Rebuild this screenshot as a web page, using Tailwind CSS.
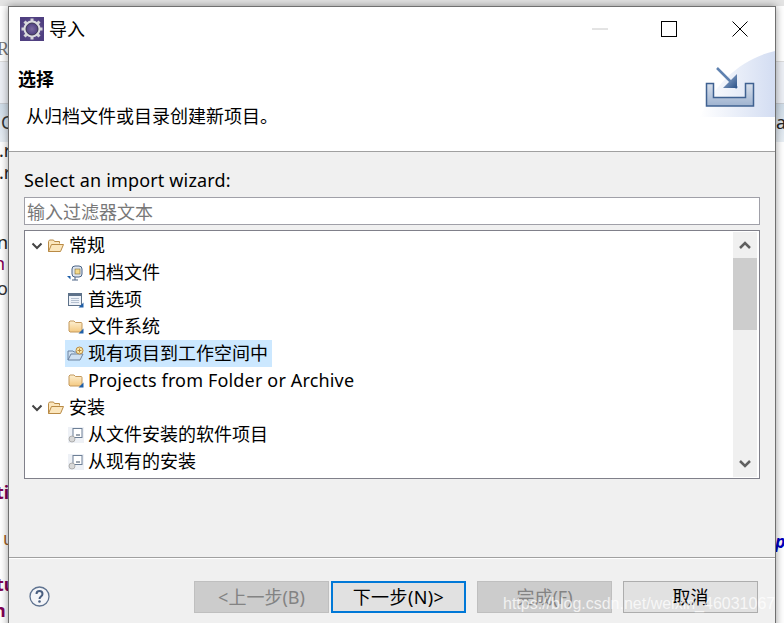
<!DOCTYPE html>
<html lang="zh">
<head>
  <meta charset="UTF-8" />
  <title>导入</title>
  <script src="https://cdn.jsdelivr.net/npm/@tailwindcss/browser@4"></script>
</head>
<body class="relative w-[784px] h-[623px] overflow-hidden bg-white font-['Noto_Sans','Noto_Sans_CJK_SC',sans-serif] text-[18px] text-black">
  <svg class="absolute w-0 h-0">
    <defs>
      <linearGradient id="fold" x1="0" y1="0" x2="0" y2="1"><stop offset="0" stop-color="#fdf0d2"/><stop offset="1" stop-color="#f4c981"/></linearGradient>
      <linearGradient id="sw" x1="0" y1="0" x2="1" y2="0"><stop offset="0" stop-color="#ffffff"/><stop offset="1" stop-color="#d3ddf2"/></linearGradient>
      <linearGradient id="tray" x1="0" y1="0" x2="0" y2="1"><stop offset="0" stop-color="#d8e0ec"/><stop offset="1" stop-color="#9fb3d0"/></linearGradient>
      <linearGradient id="head" x1="0" y1="0" x2="1" y2="1"><stop offset="0" stop-color="#a5bada"/><stop offset="1" stop-color="#2b5288"/></linearGradient>
      <radialGradient id="gearbg"><stop offset="0" stop-color="#7a6a9e"/><stop offset="1" stop-color="#4f3f80"/></radialGradient>
    </defs>
  </svg>

  <!-- editor behind the dialog -->
  <div class="absolute inset-0 flex flex-col">
    <div class="h-[6px] bg-[#e4e4e4]"></div>
    <div class="h-[56px] bg-white border-b border-[#dcdcdc]"></div>
    <div class="h-[42px] bg-[#eceff5] border-b border-[#c8ccd2]"></div>
    <div class="h-[38px] bg-gradient-to-b from-[#cfdce8] to-[#e8eef4]"></div>
    <div class="flex-1 bg-white"></div>
  </div>
  <span class="absolute left-[-3px] top-[39px] leading-5 text-[#777] font-['Liberation_Serif',serif]">R</span>
  <span class="absolute left-[1px] top-[112px] leading-5 text-[#333]">C</span>
  <span class="absolute left-[-1px] top-[140px] leading-5 text-[#222]">.r</span>
  <span class="absolute left-[-1px] top-[162px] leading-5 text-[#222]">.r</span>
  <span class="absolute left-[-3px] top-[232px] leading-5 text-[#222]">ns</span>
  <span class="absolute left-[-6px] top-[253px] leading-5 text-[#7f0055]">n</span>
  <span class="absolute left-[-3px] top-[278px] leading-5 text-[#333]">or</span>
  <span class="absolute left-[-4px] top-[482px] leading-5 font-bold text-[#7f0055]">ti</span>
  <span class="absolute left-[3px] top-[528px] leading-5 text-[#a0622a]">u</span>
  <span class="absolute left-[-4px] top-[574px] leading-5 font-bold text-[#7f0055]">tu</span>
  <span class="absolute left-[-6px] top-[600px] leading-5 font-bold text-[#7f0055]">n</span>
  <span class="absolute left-[776px] top-[112px] leading-5 text-[#222]">a</span>
  <span class="absolute left-[775px] top-[531px] leading-5 italic font-bold text-[#0000c0]">p</span>

  <!-- dialog -->
  <div class="absolute left-[8px] top-[6px] w-[768px] h-[640px] flex flex-col bg-[#f0f0f0] border border-[#707070] shadow-[0_0_8px_rgba(0,0,0,0.4)]">
    <div class="h-[145px] shrink-0 relative bg-white border-b border-[#a0a0a0]">
      <div class="flex items-center h-[44px] pl-[11px]">
        <svg class="w-[24px] h-[24px]" viewBox="0 0 24 24">
          <rect width="24" height="24" fill="url(#gearbg)"/>
          <g stroke="#d4d4d8" stroke-width="3">
            <path d="M12 1.500v21M1.500 12h21M4.500 4.500l15 15M19.500 4.500l-15 15"/>
          </g>
          <circle cx="12" cy="12" r="8.500" fill="#dcdce0"/>
          <circle cx="12" cy="12" r="6" fill="url(#gearbg)" stroke="#3a3450"/>
        </svg>
        <span class="ml-[5px] leading-none">导入</span>
      </div>
      <svg class="absolute left-[583px] top-[21px] w-[16px] h-[2px]" viewBox="0 0 16 2"><path d="M0 1h16" stroke="#c8c8c8"/></svg>
      <svg class="absolute left-[652px] top-[14px] w-[16px] h-[16px]" viewBox="0 0 16 16"><rect x=".5" y=".5" width="15" height="15" fill="none" stroke="#000"/></svg>
      <svg class="absolute left-[723px] top-[14px] w-[16px] h-[16px]" viewBox="0 0 16 16"><path d="M.5.5l15 15M15.500.5l-15 15" stroke="#000" fill="none"/></svg>
      <p class="absolute left-[9px] top-[60px] font-bold leading-6">选择</p>
      <p class="absolute left-[17px] top-[97px] leading-6">从归档文件或目录创建新项目。</p>
      <svg class="absolute right-0 top-[43px] w-[76px] h-[68px]" viewBox="0 0 76 68">
        <path d="M1 67C16 32 44 8 76 1V67Z" fill="url(#sw)"/>
        <path d="M7.500 33.500H14.500V47.500H46.500V33.500H54.500V56H7.500Z" fill="url(#tray)" stroke="#3f6191" stroke-width="1.500"/>
        <path d="M18 18l20 20" stroke="#5f82b0" stroke-width="2.500"/>
        <path d="M38 24V38H24Z" fill="url(#head)"/>
      </svg>
    </div>

    <div class="flex-1 border-b border-[#a0a0a0] relative px-[15px]">
      <p class="mt-[16px] leading-[24px] tracking-[0.16px]">Select an import wizard:</p>
      <div class="mt-[5px] h-[28px] w-[736px] bg-white border border-[#a0a0a8] pl-[2px] leading-[28px] text-[#787878]">输入过滤器文本</div>
      <div class="mt-[5px] h-[249px] w-[736px] bg-white border border-[#80808a] flex">
        <ul class="flex-1 pt-[1px]">
          <li class="h-[27px] flex items-center pl-[6px]">
            <svg class="w-[12px] h-[8px]" viewBox="0 0 12 8"><path d="M1.500 1.500L6 6l4.500-4.500" fill="none" stroke="#444" stroke-width="2"/></svg>
            <svg class="ml-[5px] w-[16px] h-[14px]" viewBox="0 0 16 14"><path d="M.5 12.500V2.500l1-1.500h4l1 1.500h5v2M.5 12.500l3-7h12l-3 7Z" fill="#fbe6bd" stroke="#b98a45"/></svg>
            <span class="ml-[5px]">常规</span>
          </li>
          <li class="h-[27px] flex items-center pl-[42px]">
            <svg class="w-[16px] h-[16px]" viewBox="0 0 16 16"><rect x="5" y="1" width="10" height="11" rx="3" fill="#dfe6f0" stroke="#4a6385"/><rect x="8" y="4" width="5" height="5" fill="#f4d98a" stroke="#7a6a3a" stroke-width=".6"/><path d="M8 12v3M5 15h6" stroke="#4a6385"/><path d="M0 11h3.500v3.500Z" fill="#1f5fa8"/></svg>
            <span class="ml-[5px]">归档文件</span>
          </li>
          <li class="h-[27px] flex items-center pl-[43px]">
            <svg class="w-[16px] h-[16px]" viewBox="0 0 16 16"><rect x=".5" y="1.500" width="13" height="12" fill="#eef2f8" stroke="#5d7189"/><path d="M1 2h12v2H1Z" fill="#5d7189"/><path d="M3 6.500h8M3 8.500h8M3 10.500h8" stroke="#b4c0d0"/><path d="M15.500 10.500v5H10.500Z" fill="#1f5fa8"/></svg>
            <span class="ml-[4px]">首选项</span>
          </li>
          <li class="h-[27px] flex items-center pl-[43px]">
            <svg class="w-[16px] h-[15px]" viewBox="0 0 16 15"><path d="M1 12V3l1-1h4l1.500 1.500H13a1 1 0 0 1 1 1V12a1 1 0 0 1-1 1H2Z" fill="url(#fold)" stroke="#c4995c"/><path d="M15.500 9.500v5H10.500Z" fill="#1f5fa8"/></svg>
            <span class="ml-[4px]">文件系统</span>
          </li>
          <li class="h-[27px] flex items-center pl-[40px]">
            <span class="flex items-center h-[27px] bg-[#cce8ff] pr-[4px] pl-[2px]">
              <svg class="w-[18px] h-[16px]" viewBox="0 0 18 16"><path d="M1 14V5h5l1 1h4v2M1 14l3-6h12l-3 6Z" fill="#cfe0f2" stroke="#6c83a0"/><circle cx="12.500" cy="4.500" r="3.500" fill="#fbe9a8" stroke="#b98a45"/><path d="M10.500 4.500h4M12.500 2.500v4" stroke="#b98a45"/></svg>
              <span class="ml-[3px]">现有项目到工作空间中</span>
            </span>
          </li>
          <li class="h-[27px] flex items-center pl-[43px]">
            <svg class="w-[16px] h-[15px]" viewBox="0 0 16 15"><path d="M1 12V3l1-1h4l1.500 1.500H13a1 1 0 0 1 1 1V12a1 1 0 0 1-1 1H2Z" fill="url(#fold)" stroke="#c4995c"/><path d="M15.500 9.500v5H10.500Z" fill="#1f5fa8"/></svg>
            <span class="ml-[4px] tracking-[0.16px]">Projects from Folder or Archive</span>
          </li>
          <li class="h-[27px] flex items-center pl-[6px]">
            <svg class="w-[12px] h-[8px]" viewBox="0 0 12 8"><path d="M1.500 1.500L6 6l4.500-4.500" fill="none" stroke="#444" stroke-width="2"/></svg>
            <svg class="ml-[5px] w-[16px] h-[14px]" viewBox="0 0 16 14"><path d="M.5 12.500V2.500l1-1.500h4l1 1.500h5v2M.5 12.500l3-7h12l-3 7Z" fill="#fbe6bd" stroke="#b98a45"/></svg>
            <span class="ml-[5px]">安装</span>
          </li>
          <li class="h-[27px] flex items-center pl-[43px]">
            <svg class="w-[16px] h-[16px]" viewBox="0 0 16 16"><rect width="16" height="16" fill="#eef1f6"/><rect x="5" y="1.500" width="9" height="9" fill="#fff" stroke="#6d7f96"/><path d="M8 8h4" stroke="#3c4c60"/><circle cx="4" cy="12" r="3" fill="#d8d8d8" stroke="#9a9a9a" stroke-width=".7"/></svg>
            <span class="ml-[4px]">从文件安装的软件项目</span>
          </li>
          <li class="h-[27px] flex items-center pl-[43px]">
            <svg class="w-[16px] h-[16px]" viewBox="0 0 16 16"><rect width="16" height="16" fill="#eef1f6"/><rect x="5" y="1.500" width="9" height="9" fill="#fff" stroke="#6d7f96"/><path d="M8 8h4" stroke="#3c4c60"/><circle cx="4" cy="12" r="3" fill="#d8d8d8" stroke="#9a9a9a" stroke-width=".7"/></svg>
            <span class="ml-[4px]">从现有的安装</span>
          </li>
        </ul>
        <div class="w-[24px] mr-[2px] my-[1px] bg-[#f0f0f0] flex flex-col">
          <div class="h-[26px] flex items-center justify-center">
            <svg class="w-[12px] h-[8px]" viewBox="0 0 12 8"><path d="M1 7l5-5 5 5" fill="none" stroke="#606060" stroke-width="2.500"/></svg>
          </div>
          <div class="h-[72px] bg-[#cdcdcd]"></div>
          <div class="flex-1"></div>
          <div class="h-[26px] flex items-center justify-center">
            <svg class="w-[12px] h-[8px]" viewBox="0 0 12 8"><path d="M1 1l5 5 5-5" fill="none" stroke="#606060" stroke-width="2.500"/></svg>
          </div>
        </div>
      </div>
    </div>

    <div class="h-[87px] shrink-0 border-t border-white flex pt-[22px]">
      <svg class="ml-[20px] mt-[5px] w-[21px] h-[21px]" viewBox="0 0 21 21"><circle cx="10.500" cy="10.500" r="9.500" fill="#f4f5f8" stroke="#5f7390" stroke-width="1.300"/><path d="M7.500 8c0-4 6-4 6 0 0 2.500-3 2.500-3 5" fill="none" stroke="#4a5f80" stroke-width="2"/><circle cx="10.500" cy="15.500" r="1.300" fill="#4a5f80"/></svg>
      <button class="ml-[144px] w-[135px] h-[32px] pt-px bg-[#cccccc] border border-[#bfbfbf] text-[#838383]">&lt;上一步(B)</button>
      <button class="ml-[2px] w-[135px] h-[32px] pt-px bg-[#e1e1e1] border-2 border-[#0078d7] tracking-[0.4px]">下一步(N)&gt;</button>
      <button class="ml-[11px] w-[135px] h-[32px] pt-px bg-[#cccccc] border border-[#bfbfbf] text-[#838383]">完成(F)</button>
      <button class="ml-[11px] w-[135px] h-[32px] pt-px bg-[#e1e1e1] border border-[#adadad]">取消</button>
    </div>
  </div>

  <span class="absolute left-[503px] top-[592px] text-[16px] leading-6 text-white/75 font-['Liberation_Sans',sans-serif] whitespace-nowrap">https://blog.csdn.net/weixin_46031067</span>
</body>
</html>
